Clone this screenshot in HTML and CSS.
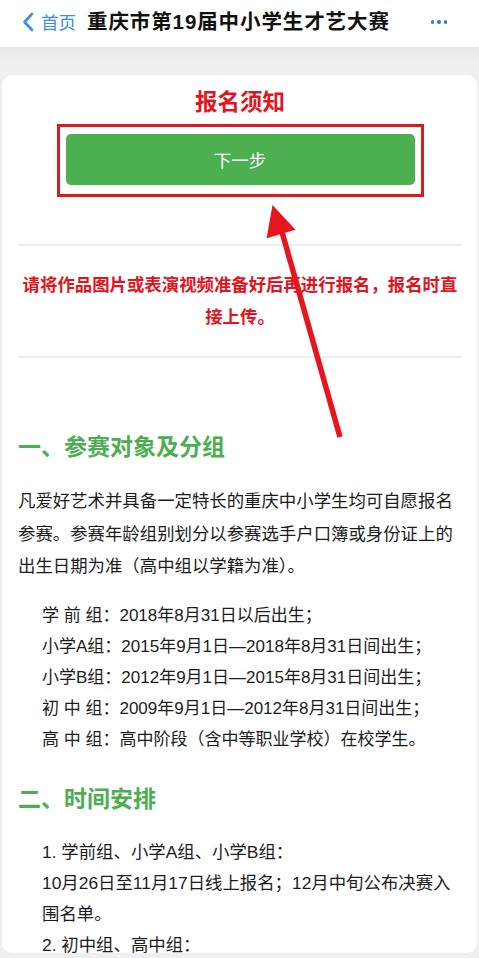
FILE: index.html
```html
<!DOCTYPE html>
<html lang="zh">
<head>
<meta charset="utf-8">
<title>重庆市第19届中小学生才艺大赛</title>
<link rel="stylesheet" href="styles.css">
</head>
<body>
<div class="page">
  <header class="topbar">
    <div class="back">
      <svg class="chev" width="12" height="20" viewBox="0 0 12 20"><path d="M10 2 L2.5 10 L10 18" fill="none" stroke="#3a8ee6" stroke-width="2.6" stroke-linecap="round" stroke-linejoin="round"/></svg>
      <span class="back-text">首页</span>
    </div>
    <div class="title">重庆市第19届中小学生才艺大赛</div>
    <div class="more"><i></i><i></i><i></i></div>
  </header>
  <div class="band"></div>
  <main class="card">
    <h1 class="notice-title">报名须知</h1>
    <div class="highlight">
      <button class="next-btn">下一步</button>
    </div>
    <hr class="divider first">
    <p class="notice">请将作品图片或表演视频准备好后再进行报名，报名时直接上传。</p>
    <hr class="divider second">
    <h2 class="sec-title s1">一、参赛对象及分组</h2>
    <p class="para">凡爱好艺术并具备一定特长的重庆中小学生均可自愿报名参赛。参赛年龄组别划分以参赛选手户口簿或身份证上的出生日期为准（高中组以学籍为准）。</p>
    <ul class="list groups">
      <li>学 前 组：2018年8月31日以后出生；</li>
      <li>小学A组：2015年9月1日—2018年8月31日间出生；</li>
      <li>小学B组：2012年9月1日—2015年8月31日间出生；</li>
      <li>初 中 组：2009年9月1日—2012年8月31日间出生；</li>
      <li>高 中 组：高中阶段（含中等职业学校）在校学生。</li>
    </ul>
    <h2 class="sec-title s2">二、时间安排</h2>
    <ul class="list times">
      <li>1. 学前组、小学A组、小学B组：</li>
      <li>10月26日至11月17日线上报名；12月中旬公布决赛入围名单。</li>
      <li>2. 初中组、高中组：</li>
    </ul>
  </main>
  <svg class="arrow" width="479" height="958" viewBox="0 0 479 958">
    <line x1="282" y1="232" x2="340" y2="437" stroke="#e8141e" stroke-width="5.5"/>
    <polygon points="272.5,205 295.5,229.8 266.6,238.2" fill="#e8141e"/>
  </svg>
</div>
</body>
</html>
```
FILE: styles.css
```css
* { box-sizing: border-box; }
html, body {
  margin: 0;
  padding: 0;
  background: #efefef;
}
body {
  font-family: "Noto Sans CJK SC", sans-serif;
  color: #1c1c1c;
}
.page {
  position: relative;
  width: 479px;
  height: 958px;
  overflow: hidden;
  display: flex;
  flex-direction: column;
}
.topbar {
  height: 47px;
  background: #ffffff;
  display: flex;
  align-items: center;
  padding: 0 0 3px 22px;
  flex-shrink: 0;
}
.back {
  display: flex;
  align-items: center;
  gap: 7px;
}
.chev { display: block; }
.back-text {
  font-size: 17.5px;
  color: #3a8ee6;
  line-height: 24px;
}
.title {
  margin-left: 11px;
  font-size: 20.5px;
  font-weight: 600;
  color: #111;
  line-height: 28px;
  letter-spacing: 0.9px;
  font-family: "Liberation Sans", "Noto Sans CJK SC", sans-serif;
}
.more {
  margin-left: auto;
  margin-right: 32px;
  display: flex;
  gap: 3px;
}
.more i {
  width: 3.5px;
  height: 3.5px;
  border-radius: 50%;
  background: #2f7fd0;
  display: block;
}
.band {
  height: 28px;
  background: linear-gradient(#ebebeb, #f1f1f1);
  flex-shrink: 0;
}
.card {
  margin: 0 2px;
  height: 878px;
  background: #ffffff;
  border-radius: 10px;
  padding: 10px 15px 0 16px;
  overflow: hidden;
  flex-shrink: 0;
}
.notice-title {
  margin: 0;
  text-align: center;
  font-size: 22.5px;
  line-height: 30px;
  font-weight: 700;
  color: #e3141d;
}
.highlight {
  margin: 9px auto 0;
  width: 367px;
  border: 3px solid #da1b24;
  padding: 7px 6px 9px;
}
.next-btn {
  display: block;
  width: 100%;
  height: 51px;
  border: none;
  border-radius: 5px;
  background: #4caf50;
  color: #ffffff;
  font-family: "Noto Sans CJK SC", sans-serif;
  font-size: 17.5px;
  padding: 0;
}
.divider {
  border: none;
  height: 2px;
  background: #eeeeee;
  margin: 0;
}
.divider.first { margin-top: 47px; }
.notice {
  margin: 22px 0 0;
  text-align: center;
  font-size: 17.4px;
  line-height: 32px;
  font-weight: 700;
  color: #e3141d;
}
.divider.second { margin-top: 24px; }
.sec-title {
  margin: 0;
  font-size: 23px;
  line-height: 32px;
  font-weight: 700;
  color: #4cae50;
}
.sec-title.s1 { margin-top: 71px; }
.sec-title.s2 { margin-top: 26.5px; }
.para {
  margin: 23px 0 0;
  font-size: 17.4px;
  line-height: 32.5px;
}
.list {
  list-style: none;
  margin: 0;
  padding: 0 0 0 24px;
  font-family: "Liberation Sans", "Noto Sans CJK SC", sans-serif;
  font-size: 17px;
  line-height: 31px;
}
.list.groups { margin-top: 18px; }
.list.times { margin-top: 23.5px; font-size: 17.4px; }
.arrow {
  position: absolute;
  left: 0;
  top: 0;
  pointer-events: none;
}
```
